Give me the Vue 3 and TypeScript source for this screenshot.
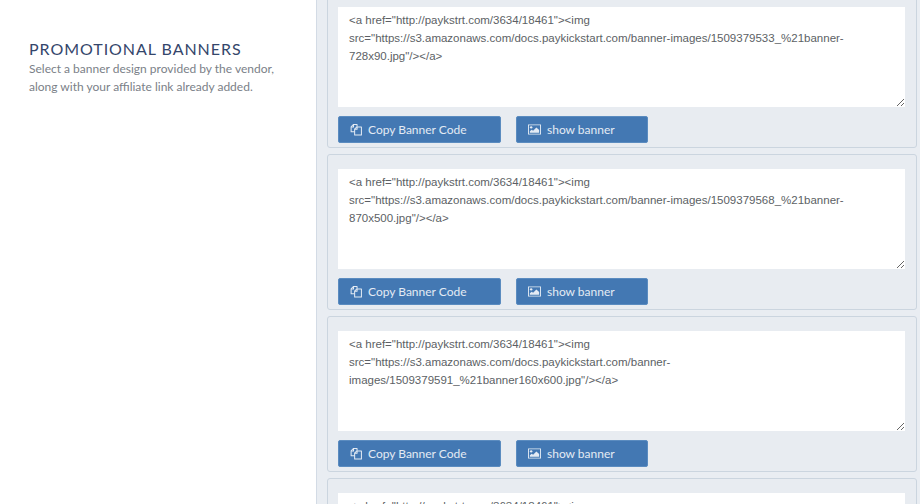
<script setup lang="ts">
interface Banner { code: string }
const banners: Banner[] = [
  { code: '<a href="http://paykstrt.com/3634/18461"><img src="https://s3.amazonaws.com/docs.paykickstart.com/banner-images/1509379533_%21banner-728x90.jpg"/></a>' },
  { code: '<a href="http://paykstrt.com/3634/18461"><img src="https://s3.amazonaws.com/docs.paykickstart.com/banner-images/1509379568_%21banner-870x500.jpg"/></a>' },
  { code: '<a href="http://paykstrt.com/3634/18461"><img src="https://s3.amazonaws.com/docs.paykickstart.com/banner-images/1509379591_%21banner160x600.jpg"/></a>' },
  { code: '<a href="http://paykstrt.com/3634/18461"><img src="https://s3.amazonaws.com/docs.paykickstart.com/banner-images/1509379612_%21banner-300x250.jpg"/></a>' },
]
</script>

<template>
  <div class="page">
    <aside class="intro">
      <h2 class="title">PROMOTIONAL BANNERS</h2>
      <p class="desc">Select a banner design provided by the vendor, along with your affiliate link already added.</p>
    </aside>
    <main class="list">
      <section v-for="(b, i) in banners" :key="i" class="card">
        <textarea class="code" readonly :value="b.code"></textarea>
        <div class="actions">
          <button class="btn copy" type="button">
            <svg class="icon" viewBox="0 0 14 14" fill="none" stroke="currentColor" stroke-width="1.1" stroke-linejoin="round">
              <path d="M5 9.5H1.2V4.2L3.6 1.6H7.6V4" />
              <path d="M1.2 4.4H3.8V1.6" />
              <path d="M5 6.6L7.4 4.2H12.3V12.9H5Z" />
              <path d="M5 6.8H7.6V4.2" />
            </svg>
            <span>Copy Banner Code</span>
          </button>
          <button class="btn show" type="button">
            <svg class="icon" viewBox="0 0 14 12">
              <path fill="currentColor" fill-rule="evenodd" d="M0 0.5H14V11.5H0ZM1 1.5V10.5H13V1.5Z" />
              <circle cx="3.4" cy="3.7" r="1.3" fill="currentColor" />
              <path fill="currentColor" d="M2 9.6V8L4 6.2 5.5 7.4 9 3.8 12 6.6V9.6Z" />
            </svg>
            <span>show banner</span>
          </button>
        </div>
      </section>
    </main>
  </div>
</template>

<style>
html, body { margin: 0; background: #fff; overflow: hidden; }
</style>

<style scoped>
.page {
  display: flex;
  width: 920px;
  height: 504px;
  overflow: hidden;
  font-family: Lato, "Liberation Sans", sans-serif;
  background: #fff;
}
.intro {
  width: 316px;
  flex: none;
  box-sizing: border-box;
  padding: 40px 28px 0 29px;
}
.title {
  margin: 0;
  font-size: 16px;
  line-height: 18px;
  font-weight: 400;
  letter-spacing: 0.95px;
  color: #34466b;
  white-space: nowrap;
}
.desc {
  margin: 2px 0 0;
  font-size: 12px;
  line-height: 18px;
  color: #7b7f88;
}
.list {
  flex: 1;
  box-sizing: border-box;
  height: 504px;
  overflow: hidden;
  padding: 0 3px 0 10px;
  background: #e9edf2;
  border-left: 1px solid #d3dbe5;
  display: flex;
  flex-direction: column;
  gap: 6px;
  margin: 0;
}
.card {
  flex: none;
  box-sizing: border-box;
  height: 156px;
  padding: 14px 11px 3px 10px;
  background: #e8ecf1;
  border: 1px solid #cbd5df;
  border-radius: 3px;
}
.card:first-child { margin-top: -8px; }
.code {
  display: block;
  box-sizing: border-box;
  width: 100%;
  height: 100px;
  padding: 4px 11px;
  border: 0;
  outline: 0;
  background: #fff;
  font-family: "Liberation Sans", Arial, sans-serif;
  font-size: 11.5px;
  line-height: 18px;
  color: #5c5f65;
  resize: vertical;
}
.actions {
  display: flex;
  gap: 15px;
  margin-top: 9px;
}
.btn {
  display: flex;
  align-items: center;
  height: 27px;
  padding: 0 0 0 11px;
  border: 1px solid #5b8cc0;
  border-radius: 2px;
  background: #4378b3;
  color: #e4ebf4;
  font: inherit;
  font-size: 12px;
}
.copy { width: 163px; gap: 5px; }
.show { width: 132px; gap: 6px; }
.icon { width: 13px; height: 13px; flex: none; }
</style>
